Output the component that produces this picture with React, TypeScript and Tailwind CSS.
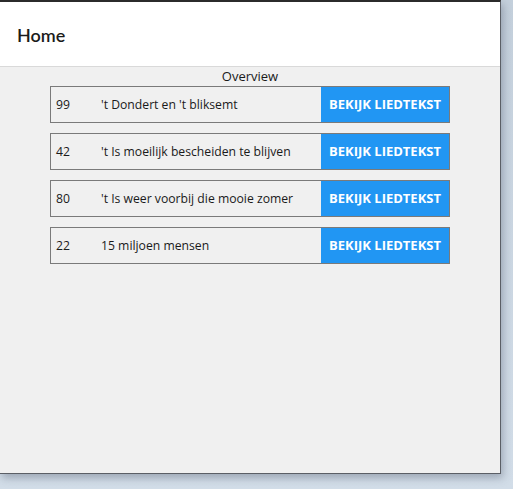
import React from 'react';

type Song = { number: number; title: string };

// Songs shown in the overview list
const songs: Song[] = [
  { number: 99, title: "'t Dondert en 't bliksemt" },
  { number: 42, title: "'t Is moeilijk bescheiden te blijven" },
  { number: 80, title: "'t Is weer voorbij die mooie zomer" },
  { number: 22, title: '15 miljoen mensen' },
];

const SongRow = ({ song }: { song: Song }) => (
  <div className="flex h-[37px] w-[400px] items-stretch border border-[#7a7a7a]">
    <span className="w-[50px] pl-[5px] leading-[36px]">{song.number}</span>
    <span className="flex-1 truncate leading-[36px]">{song.title}</span>
    <button className="w-[128px] bg-[#2196f3] text-[13px] font-bold text-white">BEKIJK LIEDTEKST</button>
  </div>
);

export default function App() {
  return (
    <div className="h-[489px] w-[513px] overflow-hidden bg-gradient-to-b from-[#c4d0dc] to-[#d2dde8] font-['Open_Sans',sans-serif] text-[12.2px] text-[#1a1a1a]">
      <div className="flex h-[474px] w-[501px] flex-col border-t-2 border-r border-b border-t-[#2b2b2b] border-r-[#5b5f66] border-b-[#5b5f66] bg-[#f0f0f0] shadow-[2px_4px_8px_rgba(60,70,90,0.35)]">
        <header className="flex h-[65px] items-center border-b border-[#d9d9d9] bg-white pl-[17px]">
          <h1 className="pt-[2px] font-['Lato',sans-serif] text-[18px] font-semibold text-[#1b1b1b]">Home</h1>
        </header>
        <main className="flex flex-col items-center">
          <div className="h-[19px] text-[13px] leading-[19px]">Overview</div>
          <div className="flex flex-col gap-[10px]">
            {songs.map((song) => (
              <SongRow key={song.number} song={song} />
            ))}
          </div>
        </main>
      </div>
    </div>
  );
}
